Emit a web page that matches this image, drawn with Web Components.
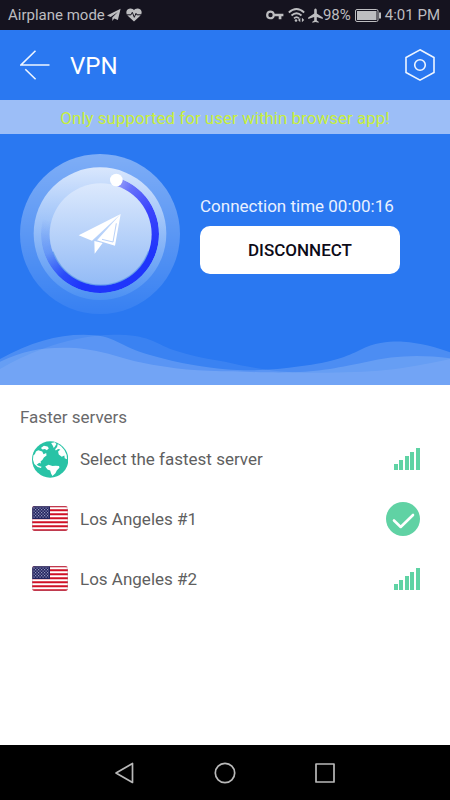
<!DOCTYPE html>
<html lang="en">
<head>
<meta charset="utf-8">
<meta name="viewport" content="width=device-width, initial-scale=1">
<title>VPN</title>
<style>
html, body { margin: 0; }
body { font-family: Roboto, "Liberation Sans", sans-serif; background: #fff; }
</style>
</head>
<body>
<vpn-app></vpn-app>
<script>
const define = (name, markup) => {
  const template = document.createElement('template');
  template.innerHTML = markup;
  customElements.define(name, class extends HTMLElement {
    constructor() {
      super();
      this.attachShadow({ mode: 'open' }).append(template.content.cloneNode(true));
    }
  });
};

define('status-bar', `
<style>
:host { display: flex; align-items: center; justify-content: space-between; height: 30px; padding: 0 10px 0 8px; background: #15131f; color: #bdbdc0; font-size: 15px; line-height: 20px; white-space: nowrap; }
div { display: flex; align-items: center; }
svg { display: block; flex: none; fill: currentColor; }
.heart { margin-left: 5px; }
.plane { margin-left: 2px; }
.wifi { margin: 0 3px 0 4px; }
.battery { margin: 0 4px; }
</style>
<div>
  <span>Airplane mode</span>
  <svg class="plane" width="14" height="14" viewBox="0 0 14 14"><path d="M13.6.8 0 7.5l3.7 1.6L10.8 4 5.3 9.6v3.5l1.9-2.6 3.7 1.6z"/></svg>
  <svg class="heart" width="16" height="14" viewBox="0 0 16 14"><path d="M8 13.5 2 8C-.8 5 0 1 4 .5 6 .3 7.300 1.200 8 2.300 8.700 1.200 10 .3 12 .5c4 .5 4.800 4.500 2 7.500z"/><path d="M1 6.800h4l1.300-2.500 2 5 1.700-4 .8 1.500H15" fill="none" stroke="#15131f" stroke-width="1"/></svg>
</div>
<div>
  <svg width="18" height="10" viewBox="0 0 18 10"><path fill-rule="evenodd" d="M4.500.5a4.400 4.400 0 1 0 4.200 5.700h4v3h2.700v-3h2V3.700H8.700A4.400 4.400 0 0 0 4.500.5zm0 2.300a2.200 2.200 0 1 1 0 4.400 2.200 2.200 0 0 1 0-4.400z"/></svg>
  <svg class="wifi" width="17" height="16" viewBox="0 0 17 16"><g fill="none" stroke="currentColor" stroke-width="1.700"><path d="M.8 5.500Q8.500-1.500 16.200 5.500M3.500 8.500q5-4.500 10 0M6 11.300q2.500-2.500 5 0"/></g><circle cx="8" cy="13.500" r="1.300"/><path d="m10 13 2.300-2.300v4.600zM16.200 13l-2.300-2.300v4.600z"/></svg>
  <svg width="15" height="15" viewBox="0 0 15 15"><path d="M7.500.5c1 0 1.300 1 1.300 2v3l6 4v1.500l-6-2v3.500l1.900 1.300v1L7.500 14l-3.200.8v-1l1.900-1.300V9l-6 2V9.500l6-4v-3c0-1 .3-2 1.300-2z"/></svg>
  <span>98%</span>
  <svg class="battery" width="26" height="13" viewBox="0 0 26 13"><rect x=".5" y=".5" width="22.500" height="12" rx="1.500" fill="none" stroke="currentColor"/><path d="M2 2h19.500v9H2zM24 3.500h2v6h-2z"/></svg>
  <span>4:01 PM</span>
</div>`);

define('app-header', `
<style>
:host { display: flex; align-items: center; height: 70px; padding: 0 15px 0 20px; }
h1 { flex: 1; margin: 0 0 0 20px; padding-top: 2px; font-size: 24px; line-height: 32px; font-weight: 400; color: #fff; }
button { display: block; padding: 0; border: 0; background: none; cursor: pointer; }
svg { display: block; fill: none; stroke: #eef5ff; stroke-width: 1.600; }
</style>
<button aria-label="Back"><svg width="30" height="30" viewBox="0 0 30 30"><path d="M29.500 15H1L15.500.7M5.300 19.300l10.300 10"/></svg></button>
<h1><slot></slot></h1>
<button aria-label="Settings"><svg width="30" height="34" viewBox="0 0 30 34"><path d="M15 1.800 29 9.500v15L15 32.200 1 24.500v-15z"/><circle cx="15" cy="17" r="5.300"/></svg></button>`);

define('notice-banner', `
<style>
:host { display: block; padding: 6px 0 4px; background: #9cbef7; color: #c8ef3c; font-size: 17px; line-height: 24px; text-align: center; }
</style>
<slot></slot>`);

define('vpn-dial', `
<style>
:host { display: grid; flex: none; width: 160px; height: 160px; }
svg, .ring { grid-area: 1 / 1; }
svg { display: block; width: 160px; height: 160px; }
.face { z-index: 1; }
.ring { width: 118px; height: 118px; place-self: center; border-radius: 50%;
  background: conic-gradient(#fff0 0deg, #fff0 16deg, #9ba3f8 17deg, #6670fa 34deg, #3a43fc 65deg, #1f35fb 110deg, #1f35fb 200deg, #2b4cf9 222deg, #4f80f680 250deg, #8db8f600 285deg, #fff0 300deg);
  mask: radial-gradient(circle, transparent 50px, #000 51px); }
</style>
<svg viewBox="30 27 480 480" aria-hidden="true">
  <defs>
    <linearGradient id="halo" x2="0" y2="1"><stop stop-color="#fff" stop-opacity=".4"/><stop offset="1" stop-color="#fff" stop-opacity=".06"/></linearGradient>
    <linearGradient id="mid" x2="0" y2="1"><stop stop-color="#d9e7fd"/><stop offset="1" stop-color="#4b90f3"/></linearGradient>
  </defs>
  <circle cx="270" cy="267" r="240" fill="url(#halo)"/>
  <circle cx="270" cy="266" r="199" fill="url(#mid)"/>
</svg>
<div class="ring"></div>
<svg class="face" viewBox="30 27 480 480" role="img" aria-label="Connected">
  <defs><linearGradient id="face" x2="0" y2="1"><stop stop-color="#dce9fd"/><stop offset="1" stop-color="#93bbf6"/></linearGradient></defs>
  <circle cx="272" cy="268" r="153" fill="url(#face)"/>
  <path d="M129 320a152 152 0 0 0 286 0" fill="none" stroke="#4e91e8" stroke-width="4" opacity=".6"/>
  <circle cx="319" cy="105" r="19" fill="#fff"/>
  <g fill="#fff"><path d="M332 207 206 271l40 16zM332 207l-17 95-54-16zM253 288l1 38 24-32z"/></g>
  <path d="m319 235-10 56-33-8" fill="none" stroke="#b8d1f9" stroke-width="3"/>
</svg>`);

define('connection-panel', `
<style>
:host { display: block; }
.main { display: flex; gap: 20px; padding: 20px 50px 20px 20px; }
.info { flex: 1; padding-top: 40px; }
p { margin: 0 0 8px; font-size: 17px; line-height: 24px; color: #e9f1ff; white-space: nowrap; }
button { display: block; width: 100%; height: 48px; padding: 0; border: 0; border-radius: 10px; background: #fff; color: #0d0b18; font: 500 17px/24px Roboto, "Liberation Sans", sans-serif; cursor: pointer; }
.waves { display: block; width: 100%; height: 51px; }
</style>
<div class="main">
  <vpn-dial></vpn-dial>
  <div class="info">
    <p><slot></slot></p>
    <button>DISCONNECT</button>
  </div>
</div>
<svg class="waves" viewBox="0 40 1350 153" preserveAspectRatio="none" aria-hidden="true">
  <g fill="#fff">
    <path opacity=".16" d="M0 115C90 65 170 42 250 42C350 42 350 75 450 103C540 130 620 140 675 146C760 153 830 147 900 137C1000 124 1040 108 1080 88C1130 62 1180 62 1210 63C1260 66 1310 80 1350 95V200H0z"/>
    <path opacity=".08" d="M0 145C90 92 220 42 340 42C450 42 460 66 520 88C580 108 630 116 675 123C760 143 840 157 950 156C1120 156 1200 148 1350 115V200H0z"/>
    <path opacity=".15" d="M0 123C70 90 120 81 190 81C290 81 340 106 420 125C520 146 600 152 700 152C940 162 970 149 1095 125C1180 104 1260 101 1350 113V200H0z"/>
  </g>
</svg>`);

define('signal-bars', `
<style>:host { display: block; } svg { display: block; fill: #5fd3a4; }</style>
<svg width="26" height="22" viewBox="0 0 26 22" role="img" aria-label="Strong signal"><path d="M0 16h4v6H0zM5 12h4v10H5zM11 8h4v14h-4zM16 4h4v18h-4zM22 0h4v22h-4z"/></svg>`);

define('check-badge', `
<style>:host { display: block; } svg { display: block; }</style>
<svg width="34" height="34" viewBox="0 0 34 34" role="img" aria-label="Selected"><circle cx="17" cy="17" r="17" fill="#60d2a4"/><path d="m8 18.500 6.700 6.500L27 13" fill="none" stroke="#fff" stroke-width="2.600" stroke-linecap="round" stroke-linejoin="round"/></svg>`);

define('globe-icon', `
<style>:host { display: block; } svg { display: block; }</style>
<svg width="36" height="37" viewBox="65 118 109 112" aria-hidden="true"><circle cx="120" cy="174" r="55" fill="#29c3a6"/><g fill="#fff">
<path d="M77 150 84 146 96 150 100 158 108 154 109 162 101 168 97 175 91 180 92 186 87 184 79 190 86 194 94 196 92 200 82 197 72 188 68 175 69 162 74 157z"/>
<path d="M92 139 101 132 112 135 116 140 110 146 104 142 97 144z"/>
<path d="M123 124 134 122 139 127 135 134 131 139 128 132z"/>
<path d="M143 127 153 134 163 145 170 160 171 173 164 170 163 162 155 166 146 159 144 150 151 144 144 142 137 147 135 143 141 136z"/>
<path d="M105 195 115 190 127 194 137 193 147 194 148 199 140 207 136 216 127 224 123 217 120 207 112 204z"/>
</g></svg>`);

define('us-flag', `
<style>:host { display: block; } svg { display: block; }</style>
<svg width="36" height="26" viewBox="0 0 36 26" aria-hidden="true">
  <defs>
    <clipPath id="c"><rect width="36" height="25" rx="3"/></clipPath>
    <pattern id="s" width="3" height="3" patternUnits="userSpaceOnUse"><path d="M0 0h1.200v1.200H0zM1.500 1.500h1.200v1.200H1.500z" fill="#9698bd"/></pattern>
  </defs>
  <g clip-path="url(#c)"><path fill="#fff" d="M0 0h36v25H0z"/>
  <path d="M0 .3h36M0 4.300h36M0 8.300h36M0 12.200h36M0 16.200h36M0 20.200h36M0 24.200h36" stroke="#cf1026" stroke-width="2"/>
  <path fill="#22235f" d="M0 0h18v13H0z"/><path fill="url(#s)" d="M1 1h16v11H1z"/></g>
  <rect x=".5" y=".5" width="35" height="24" rx="3" fill="none" stroke="#a08a9c" stroke-opacity=".35"/>
</svg>`);

define('server-row', `
<style>
:host { display: block; }
button { display: flex; align-items: center; width: 100%; height: 60px; padding: 0 30px 0 32px; border: 0; background: none; color: #5f5f61; font: 400 17px/24px Roboto, "Liberation Sans", sans-serif; text-align: left; cursor: pointer; }
.name { flex: 1; margin-left: 12px; }
</style>
<button><slot name="icon"></slot><span class="name"><slot></slot></span><slot name="state"></slot></button>`);

define('server-list', `
<style>
:host { display: block; padding-top: 20px; }
h2 { margin: 0 20px; font-size: 17px; line-height: 24px; font-weight: 400; color: #69696b; }
</style>
<h2>Faster servers</h2>
<slot></slot>`);

define('nav-bar', `
<style>
:host { display: grid; grid-template-columns: repeat(3, 1fr); align-items: center; height: 55px; padding: 0 16.667%; background: #000; }
button { display: grid; place-items: center; height: 100%; padding: 0; border: 0; background: none; cursor: pointer; }
svg { display: block; fill: none; stroke: #b9b9b9; stroke-width: 1.700; stroke-linejoin: round; }
</style>
<button aria-label="Back"><svg width="22" height="22" viewBox="0 0 22 22"><path d="M2 11 18.500 1.500v19z"/></svg></button>
<button aria-label="Home"><svg width="22" height="22" viewBox="0 0 22 22"><circle cx="11" cy="11" r="9.700"/></svg></button>
<button aria-label="Recent apps"><svg width="22" height="22" viewBox="0 0 22 22"><path d="M2 2h18v18H2z"/></svg></button>`);

define('vpn-app', `
<style>
:host { display: flex; flex-direction: column; min-height: 100vh; }
.hero { background: #2a78f1; }
main { flex: 1; }
</style>
<status-bar></status-bar>
<div class="hero">
  <app-header>VPN</app-header>
  <notice-banner>Only supported for user within browser app!</notice-banner>
  <connection-panel>Connection time 00:00:16</connection-panel>
</div>
<main>
  <server-list>
    <server-row><globe-icon slot="icon"></globe-icon>Select the fastest server<signal-bars slot="state"></signal-bars></server-row>
    <server-row><us-flag slot="icon"></us-flag>Los Angeles #1<check-badge slot="state"></check-badge></server-row>
    <server-row><us-flag slot="icon"></us-flag>Los Angeles #2<signal-bars slot="state"></signal-bars></server-row>
  </server-list>
</main>
<nav-bar></nav-bar>`);
</script>
</body>
</html>
